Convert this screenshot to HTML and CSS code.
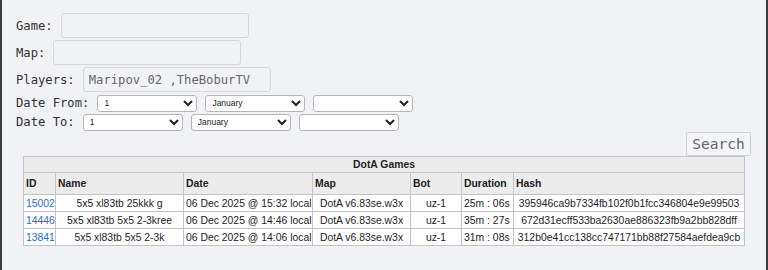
FILE: index.html
```html
<!DOCTYPE html>
<html lang="en">

<head>
	<meta charset="UTF-8">
	<meta name="viewport" content="width=device-width, initial-scale=1.0">
	<title>DotA Games</title>
	<link rel="stylesheet" href="styles.css">
</head>

<body>
	<div class="page">
		<form class="filters">
			<div class="row row-text">
				<label>Game:</label>
				<input class="field" type="text">
			</div>
			<div class="row row-text">
				<label>Map:</label>
				<input class="field" type="text">
			</div>
			<div class="row row-text">
				<label>Players:</label>
				<input class="field" type="text" value="Maripov_02 ,TheBoburTV">
			</div>
			<div class="row row-date">
				<label>Date From:</label>
				<select class="pick"><option>1</option></select>
				<select class="pick"><option>January</option></select>
				<select class="pick"><option></option></select>
			</div>
			<div class="row row-date">
				<label>Date To:</label>
				<select class="pick"><option>1</option></select>
				<select class="pick"><option>January</option></select>
				<select class="pick"><option></option></select>
			</div>
			<div class="actions">
				<button class="search" type="button">Search</button>
			</div>
		</form>

		<table class="games">
			<colgroup>
				<col class="c-id">
				<col class="c-name">
				<col class="c-date">
				<col class="c-map">
				<col class="c-bot">
				<col class="c-dur">
				<col class="c-hash">
			</colgroup>
			<tr>
				<th class="caption" colspan="7">DotA Games</th>
			</tr>
			<tr class="heads">
				<th>ID</th>
				<th>Name</th>
				<th>Date</th>
				<th>Map</th>
				<th>Bot</th>
				<th>Duration</th>
				<th>Hash</th>
			</tr>
			<tr>
				<td><a href="#">15002</a></td>
				<td class="mid">5x5 xl83tb 25kkk g</td>
				<td>06 Dec 2025 @ 15:32 local</td>
				<td class="mid">DotA v6.83se.w3x</td>
				<td class="mid">uz-1</td>
				<td>25m : 06s</td>
				<td class="mid">395946ca9b7334fb102f0b1fcc346804e9e99503</td>
			</tr>
			<tr>
				<td><a href="#">14446</a></td>
				<td class="mid">5x5 xl83tb 5x5 2-3kree</td>
				<td>06 Dec 2025 @ 14:46 local</td>
				<td class="mid">DotA v6.83se.w3x</td>
				<td class="mid">uz-1</td>
				<td>35m : 27s</td>
				<td class="mid">672d31ecff533ba2630ae886323fb9a2bb828dff</td>
			</tr>
			<tr>
				<td><a href="#">13841</a></td>
				<td class="mid">5x5 xl83tb 5x5 2-3k</td>
				<td>06 Dec 2025 @ 14:06 local</td>
				<td class="mid">DotA v6.83se.w3x</td>
				<td class="mid">uz-1</td>
				<td>31m : 08s</td>
				<td class="mid">312b0e41cc138cc747171bb88f27584aefdea9cb</td>
			</tr>
		</table>
	</div>
</body>

</html>
```

FILE: styles.css
```css
body {
	margin: 0;
	background: #f1f2f6;
}

.page {
	height: 270px;
	box-sizing: border-box;
	border-left: 2px solid #3b3b3f;
	border-right: 2px solid #3b3b3f;
	background: #f1f2f6;
	padding: 13px 15px 0 14px;
	font-family: "DejaVu Sans Mono", monospace;
	font-size: 12.2px;
	color: #333;
}

.row {
	display: flex;
	align-items: center;
	gap: 8px;
}

.row-text {
	height: 25px;
	margin-bottom: 2px;
}

.row-date {
	height: 18px;
	margin-bottom: 1px;
}

.field {
	box-sizing: border-box;
	width: 188px;
	height: 25px;
	margin: 0;
	padding: 0 5px;
	border: 1px solid #d6d7db;
	border-radius: 3px;
	background: transparent;
	font-family: "DejaVu Sans Mono", monospace;
	font-size: 12.2px;
	color: #666;
}

.pick {
	box-sizing: border-box;
	width: 100px;
	height: 17px;
	margin: 0;
	padding: 0 0 0 2px;
	border: 1px solid #b5b5b5;
	border-radius: 3px;
	background: #fff;
	font-family: "Liberation Sans", Arial, sans-serif;
	font-size: 8.5px;
	color: #222;
}

.actions {
	display: flex;
	justify-content: flex-end;
	margin-top: 1px;
}

.search {
	height: 24px;
	width: 65px;
	padding: 0;
	border: 1px solid #d0d1d5;
	border-radius: 2px;
	background: #f4f5f8;
	font-family: "DejaVu Sans Mono", monospace;
	font-size: 14.5px;
	color: #666;
}

.games {
	margin-left: 7px;
	width: 721px;
	border-collapse: collapse;
	border: 1px solid #999;
	table-layout: fixed;
	font-family: "Liberation Sans", Arial, sans-serif;
	font-size: 10.4px;
	color: #1e1e1e;
}

.games th,
.games td {
	border: 1px solid #c4c4c4;
	padding: 0 2px;
	white-space: nowrap;
	overflow: hidden;
}

.games th {
	background: #ececec;
	text-align: left;
	font-weight: bold;
}

.games .caption {
	height: 15px;
	text-align: center;
}

.games .heads th {
	height: 21px;
}

.games td {
	height: 16px;
	background: #fff;
}

.games .mid {
	text-align: center;
}

.games a {
	color: #2a6fd0;
	text-decoration: none;
}

.c-id { width: 32px; }
.c-name { width: 128px; }
.c-date { width: 129px; }
.c-map { width: 98px; }
.c-bot { width: 51px; }
.c-dur { width: 52px; }
.c-hash { width: 231px; }
```
